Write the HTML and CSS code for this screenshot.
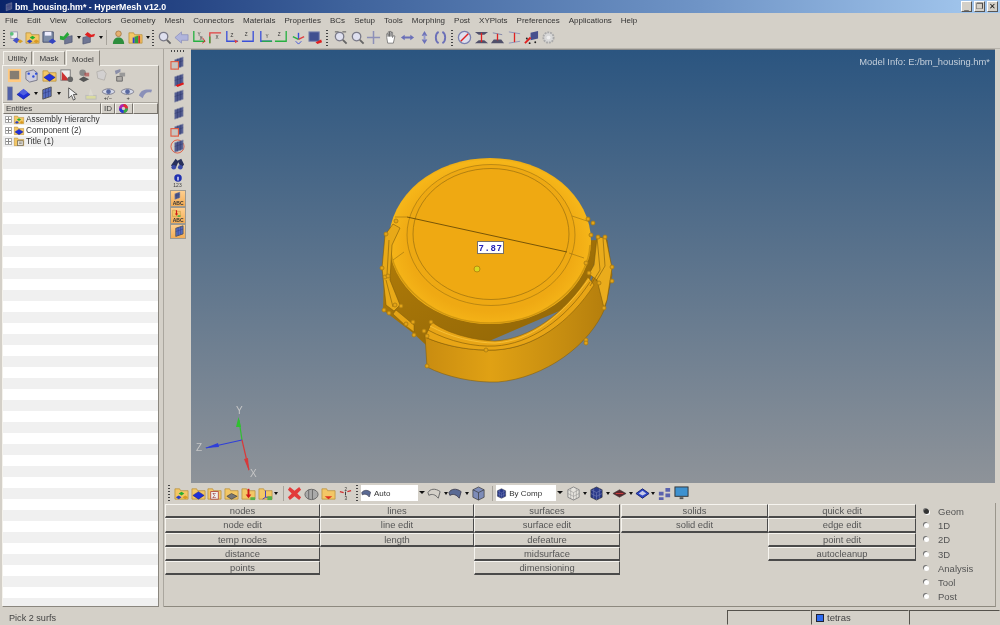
FILE: index.html
```html
<!DOCTYPE html>
<html lang="en">
<head>
<meta charset="utf-8">
<title>bm_housing.hm* - HyperMesh v12.0</title>
<link rel="stylesheet" href="styles.css">
</head>
<body>
<svg class="defs" width="0" height="0" aria-hidden="true">
  <defs>
    <symbol id="folder" viewBox="0 0 16 16"><path d="M1 3h5l1 2h8v9H1z" fill="#f3c766" stroke="#b88f3c" stroke-width=".8"/></symbol>
    <symbol id="folder-assy" viewBox="0 0 16 16"><use href="#folder"/><path d="M2 12l3-2 3 2-3 2z" fill="#2b3fc4"/><path d="M5 8l3-2 3 2-3 2z" fill="#22b030"/><path d="M9 12l3-2 3 2-3 2z" fill="#d99a22"/></symbol>
    <symbol id="folder-comp" viewBox="0 0 16 16"><use href="#folder"/><path d="M2 10l6-4 6 4-6 4z" fill="#2030d8" stroke="#101a80" stroke-width=".5"/></symbol>
    <symbol id="folder-title" viewBox="0 0 16 16"><use href="#folder"/><rect x="6" y="7" width="8" height="7" fill="#e8e4da" stroke="#444" stroke-width=".8"/><path d="M8 9h4M8 11h4" stroke="#444" stroke-width=".7"/></symbol>
    <symbol id="folder-load" viewBox="0 0 16 16"><use href="#folder"/><path d="M8 3v8" stroke="#d01818" stroke-width="2"/><path d="M5 9h6l-3 4z" fill="#d01818"/><rect x="10" y="12" width="5" height="3" fill="#58b048"/></symbol>
    <symbol id="folder-sys" viewBox="0 0 16 16"><use href="#folder"/><path d="M8 5v7h6" stroke="#3a3ac0" fill="none" stroke-width="1"/><path d="M8 12l-3 2" stroke="#3a3ac0"/><rect x="10" y="11" width="5" height="4" fill="#58b048"/></symbol>
    <symbol id="folder-x" viewBox="0 0 16 16"><use href="#folder"/><rect x="4" y="6" width="8" height="8" fill="#eee" stroke="#a33" stroke-width=".8"/><text x="5.500" y="13" font-size="7" font-family="Liberation Sans" fill="#933">Σ</text></symbol>
    <symbol id="folder-solid" viewBox="0 0 16 16"><use href="#folder"/><path d="M3 11l5-3 6 3-6 3z" fill="#777" stroke="#333" stroke-width=".6"/></symbol>
    <symbol id="folder-rb" viewBox="0 0 16 16"><use href="#folder"/><path d="M4 11h8l-4 3z" fill="#e03020"/></symbol>
    <symbol id="node" viewBox="0 0 16 16"><rect x="2" y="2" width="7" height="7" fill="#f0f0f0" stroke="#9a9ab0"/><circle cx="3" cy="4" r="2" fill="#5cc27a"/><path d="M4 11l4-3 4 3-4 3z" fill="#4452c8"/><path d="M9 12l3-2 3 2-3 2z" fill="#d7a02a"/></symbol>
    <symbol id="disk" viewBox="0 0 16 16"><path d="M1 2h11v11H1z" fill="#7f8ea8" stroke="#46506e"/><rect x="3" y="2" width="7" height="4" fill="#eef"/><path d="M7 12l4-3 4 3-4 3z" fill="#3545c0"/></symbol>
    <symbol id="imp" viewBox="0 0 16 16"><path d="M6 8l8-2v7l-8 2z" fill="#6f7693" stroke="#414868" stroke-width=".6"/><path d="M1 6l4 1 4-5 2 3-6 6-4-1z" fill="#28a838"/></symbol>
    <symbol id="exp" viewBox="0 0 16 16"><path d="M2 8l8-2v7l-8 2z" fill="#6f7693" stroke="#414868" stroke-width=".6"/><path d="M15 4l-4 1-4-3-3 3 5 3 5-1z" fill="#e02020"/></symbol>
    <symbol id="user" viewBox="0 0 16 16"><circle cx="8" cy="4" r="3" fill="#e6b070" stroke="#8a5a20" stroke-width=".6"/><path d="M2 15c0-5 3-7 6-7s6 2 6 7z" fill="#2e8e3e"/></symbol>
    <symbol id="rainbow" viewBox="0 0 16 16"><use href="#folder"/><path d="M7 14V7h2v7zM9 14V6h2v8z" fill="#30a040"/><path d="M11 14V6h2v8z" fill="#d03030"/><path d="M5 14V8h2v6z" fill="#3040d0"/></symbol>
    <symbol id="zoom" viewBox="0 0 16 16"><circle cx="7" cy="7" r="4.500" fill="#dfe0ef" stroke="#7a7a88" stroke-width="1.400"/><path d="M10.500 10.500l4 4" stroke="#666" stroke-width="2"/></symbol>
    <symbol id="left" viewBox="0 0 16 16"><path d="M1 8l7-6v3h7v6H8v3z" fill="#b0b4dc" stroke="#8488b8" stroke-width=".7"/></symbol>
    <symbol id="ax-a" viewBox="0 0 16 16"><path d="M3 1v11h12" fill="none" stroke="#26b040" stroke-width="1.400"/><path d="M12 8l3 4-3 2" fill="none" stroke="#d03030" stroke-width="1"/><text x="7" y="6" font-size="5" font-family="Liberation Sans" fill="#333">Y</text><text x="9" y="11" font-size="5" font-family="Liberation Sans" fill="#333">X</text></symbol>
    <symbol id="ax-b" viewBox="0 0 16 16"><path d="M3 14V3h12" fill="none" stroke="#e04040" stroke-width="1.400"/><path d="M3 14V7" stroke="#26b040" stroke-width="1.400"/><text x="9" y="10" font-size="5" font-family="Liberation Sans" fill="#333">X</text></symbol>
    <symbol id="ax-c" viewBox="0 0 16 16"><path d="M3 1v11h12" fill="none" stroke="#3a50d8" stroke-width="1.400"/><path d="M11 10l4 2-3 2" fill="#e04040"/><text x="7" y="7" font-size="5" font-family="Liberation Sans" fill="#333">Z</text></symbol>
    <symbol id="ax-d" viewBox="0 0 16 16"><path d="M13 1v11H1" fill="none" stroke="#3a50d8" stroke-width="1.400"/><text x="4" y="6" font-size="5" font-family="Liberation Sans" fill="#333">Z</text></symbol>
    <symbol id="ax-e" viewBox="0 0 16 16"><path d="M3 1v11h12" fill="none" stroke="#3a50d8" stroke-width="1.400"/><path d="M4 12h11" stroke="#26b040" stroke-width="1.400"/><text x="8" y="8" font-size="5" font-family="Liberation Sans" fill="#333">Y</text></symbol>
    <symbol id="ax-f" viewBox="0 0 16 16"><path d="M13 1v11H1" fill="none" stroke="#26b040" stroke-width="1.400"/><text x="4" y="6" font-size="5" font-family="Liberation Sans" fill="#333">Z</text></symbol>
    <symbol id="ax-g" viewBox="0 0 16 16"><path d="M8 3v7" stroke="#3a50d8" stroke-width="1.500"/><path d="M8 10l-6-3" stroke="#26b040" stroke-width="1.500"/><path d="M8 10l6-3" stroke="#e04040" stroke-width="1.500"/><path d="M5 12l3 3 3-3" stroke="#3a50d8" fill="none"/></symbol>
    <symbol id="screen" viewBox="0 0 16 16"><rect x="1" y="2" width="11" height="10" fill="#405090" stroke="#7d86b0"/><path d="M8 13l6-3 1 3-5 2z" fill="#e02020"/></symbol>
    <symbol id="zoom-m" viewBox="0 0 16 16"><path d="M2 2h4M10 2h4" stroke="#555"/><use href="#zoom"/></symbol>
    <symbol id="cross" viewBox="0 0 16 16"><path d="M8 1v14M1 8h14" stroke="#8d90b8" stroke-width="1.600"/></symbol>
    <symbol id="hand" viewBox="0 0 16 16"><path d="M4 8V4h1.500v3V2H7v5V1.500h1.600V7V2.500h1.600V8l1-2 1.500.5L11 14H5z" fill="#fff" stroke="#555" stroke-width=".7"/></symbol>
    <symbol id="arr-h" viewBox="0 0 16 16"><path d="M1 8l4-3v2h6V5l4 3-4 3V9H5v2z" fill="#6b70b8"/></symbol>
    <symbol id="arr-v" viewBox="0 0 16 16"><path d="M8 1l3 5H5zM8 15l3-5H5z" fill="#6b70b8"/><rect x="7" y="5" width="2" height="6" fill="#9498cc"/></symbol>
    <symbol id="rot" viewBox="0 0 16 16"><path d="M6 2C2 4 2 12 6 14M10 2c4 2 4 10 0 12" fill="none" stroke="#6b70b8" stroke-width="2"/></symbol>
    <symbol id="nomeas" viewBox="0 0 16 16"><circle cx="8" cy="8" r="6.500" fill="#dfe0ee" stroke="#7a80b0" stroke-width="1.400"/><path d="M4 12l8-8" stroke="#e02020" stroke-width="1.600"/></symbol>
    <symbol id="gap-a" viewBox="0 0 16 16"><path d="M1 2h14l-4 3H5zM1 14h14l-4-3H5z" fill="#50506a"/><path d="M8 3v10" stroke="#e02020" stroke-width="1.400"/></symbol>
    <symbol id="gap-b" viewBox="0 0 16 16"><path d="M1 14h14l-3-4H4z" fill="#50506a"/><path d="M3 3l10 2" stroke="#7f84a8"/><path d="M8 4v7" stroke="#e02020" stroke-width="1.400"/></symbol>
    <symbol id="gap-c" viewBox="0 0 16 16"><path d="M2 2l12 2M2 14l12-2" stroke="#8d90b8"/><path d="M8 3v10" stroke="#e02020" stroke-width="1.400"/></symbol>
    <symbol id="meas" viewBox="0 0 16 16"><path d="M7 3l8-2v8l-8 2z" fill="#46508e"/><path d="M1 14l6-6" stroke="#e02020" stroke-width="2"/><circle cx="3" cy="9" r="1" fill="#222"/><circle cx="6" cy="14" r="1" fill="#222"/><circle cx="12" cy="13" r="1" fill="#222"/></symbol>
    <symbol id="gear" viewBox="0 0 16 16"><circle cx="8" cy="8" r="5.500" fill="#d8d8d8" stroke="#aaa" stroke-width="2" stroke-dasharray="2 1"/><circle cx="8" cy="8" r="2" fill="#eee"/></symbol>
    <symbol id="plate" viewBox="0 0 16 16"><path d="M5 4l9-3v10l-9 3z" fill="#4e588e" stroke="#8b90a8" stroke-width=".7"/><path d="M8 3v10M11 2v10M5 8l9-3" stroke="#30386e" stroke-width=".5"/></symbol>
    <symbol id="plate-box" viewBox="0 0 16 16"><use href="#plate"/><rect x="1" y="6" width="8" height="8" fill="#c9c5c0" stroke="#e25a40" stroke-width="1.200"/></symbol>
    <symbol id="plate-red" viewBox="0 0 16 16"><use href="#plate"/><path d="M6 13l8-3 1 2-7 3z" fill="#e01818"/></symbol>
    <symbol id="plate-c" viewBox="0 0 16 16"><circle cx="8" cy="8" r="7" fill="none" stroke="#e25a40" stroke-width="1"/><use href="#plate"/></symbol>
    <symbol id="bino" viewBox="0 0 16 16"><path d="M1 10L6 3l3 3-3 7zM8 5l4-2 3 6-3 4z" fill="#28305c"/><circle cx="4" cy="12" r="2.500" fill="#3a4aa8"/><circle cx="11" cy="12" r="2.500" fill="#3a4aa8"/></symbol>
    <symbol id="info" viewBox="0 0 16 16"><circle cx="8" cy="8" r="6" fill="#2030b0"/><rect x="7" y="6" width="2" height="6" fill="#fff"/></symbol>
    <symbol id="sq-shade" viewBox="0 0 16 16"><rect x="1" y="1" width="14" height="14" fill="#ffc980"/><rect x="3" y="3" width="10" height="9" fill="#857d72"/></symbol>
    <symbol id="dots" viewBox="0 0 16 16"><path d="M2 4l8-2 4 3v8l-8 2-4-3z" fill="#ccd" stroke="#778"/><circle cx="5" cy="6" r="1.300" fill="#3050d8"/><circle cx="10" cy="9" r="1.300" fill="#3050d8"/><circle cx="13" cy="6" r="1.300" fill="#3050d8"/></symbol>
    <symbol id="comp" viewBox="0 0 16 16"><path d="M1 9l7-5 7 5-7 5z" fill="#2030d8" stroke="#101a80" stroke-width=".6"/><path d="M3 7l5-4 5 4-5 3z" fill="#5060e0"/></symbol>
    <symbol id="x-sheet" viewBox="0 0 16 16"><rect x="2" y="2" width="10" height="11" fill="#eee" stroke="#777"/><path d="M3 13V4l8 9z" fill="#c33"/><circle cx="12" cy="12" r="3" fill="#666"/></symbol>
    <symbol id="tool" viewBox="0 0 16 16"><path d="M2 12l5-3 6 3-6 3z" fill="#555"/><circle cx="6" cy="5" r="3.500" fill="#888"/><path d="M8 5h5v4H8z" fill="#a33" opacity=".6"/></symbol>
    <symbol id="pale" viewBox="0 0 16 16"><path d="M3 4l7-2 3 4-2 7-7-2z" fill="#d2d0d0" stroke="#b5b2ae"/></symbol>
    <symbol id="tie" viewBox="0 0 16 16"><path d="M3 3l6-2v3l-5 3z" fill="#8a8ea8"/><path d="M5 9h6v5H5z" fill="#b0aca8" stroke="#666"/><path d="M8 5h6v4H8z" fill="#999"/></symbol>
    <symbol id="strip" viewBox="0 0 16 16"><rect x="6" y="1" width="5" height="14" fill="#5060a8" stroke="#7a7e9a" stroke-width=".6"/></symbol>
    <symbol id="sheet" viewBox="0 0 16 16"><path d="M4 4l9-3v10l-9 3z" fill="#556cc0" stroke="#555"/><path d="M7 3v10M10 2v10M4 8l9-3" stroke="#303a80" stroke-width=".6"/></symbol>
    <symbol id="cursor" viewBox="0 0 16 16"><path d="M5 2v11l3-3 2 5 2-1-2-5h4z" fill="#f4f4f4" stroke="#333" stroke-width=".8"/></symbol>
    <symbol id="bulb" viewBox="0 0 16 16"><rect x="3" y="10" width="11" height="4" fill="#dadba0" stroke="#bbb"/><path d="M8 3l3 7H6z" fill="#dcd9d0"/></symbol>
    <symbol id="eye" viewBox="0 0 16 16"><path d="M1 6c3-4 11-4 14 0-3 4-11 4-14 0z" fill="#d4d8e8" stroke="#7a7a8a"/><circle cx="8" cy="6" r="2.500" fill="#5868a0"/></symbol>
    <symbol id="eye-pm" viewBox="0 0 16 16"><use href="#eye"/><text x="3" y="15" font-size="6" font-family="Liberation Sans" fill="#333">+/−</text></symbol>
    <symbol id="eye-dot" viewBox="0 0 16 16"><use href="#eye"/><text x="7" y="15" font-size="6" font-family="Liberation Sans" fill="#333">+</text></symbol>
    <symbol id="swoop" viewBox="0 0 16 16"><path d="M1 10c2-6 7-7 14-6l-1 3c-5-1-7 1-9 6z" fill="#8a90b8"/></symbol>
    <symbol id="del" viewBox="0 0 16 16"><path d="M3 1l5 4 5-4 2 3-4 4 4 4-2 3-5-4-5 4-2-3 4-4-4-4z" fill="#e23a3a"/></symbol>
    <symbol id="rolls" viewBox="0 0 16 16"><ellipse cx="8" cy="9" rx="7" ry="5.500" fill="#aaa" stroke="#666"/><path d="M5 4v10M9 4v10" stroke="#666"/></symbol>
    <symbol id="num" viewBox="0 0 16 16"><text x="7" y="5" font-size="5" font-family="Liberation Sans" fill="#333">2</text><text x="7" y="15" font-size="5" font-family="Liberation Sans" fill="#333">3</text><path d="M2 6l4 1M10 6l4-1" stroke="#d03030" stroke-width="1.500"/><path d="M8 6v4" stroke="#333"/></symbol>
    <symbol id="curve" viewBox="0 0 16 16"><path d="M1 7c2-4 8-5 13-1l-2 7C9 9 5 8 2 10z" fill="none" stroke="#666"/></symbol>
    <symbol id="patch" viewBox="0 0 16 16"><path d="M1 7c2-4 8-5 13-1l-2 7C9 9 5 8 2 10z" fill="#5a6a94" stroke="#445"/></symbol>
    <symbol id="cube" viewBox="0 0 16 16"><path d="M8 1l6 3v8l-6 3-6-3V4z" fill="#7e8cb8" stroke="#333" stroke-width=".7"/><path d="M2 4l6 3 6-3M8 7v8" stroke="#333" stroke-width=".7" fill="none"/></symbol>
    <symbol id="cube-wire" viewBox="0 0 16 16"><path d="M8 1l6 3v8l-6 3-6-3V4z" fill="#e4e2dc" stroke="#888"/><path d="M2 4l6 3 6-3M8 7v8M5 2.500v11M11 2.500v11M2 8l6 3 6-3" stroke="#888" stroke-width=".5" fill="none"/></symbol>
    <symbol id="cube-dark" viewBox="0 0 16 16"><path d="M8 1l6 3v8l-6 3-6-3V4z" fill="#2a3a8a" stroke="#222" stroke-width=".6"/><path d="M2 4l6 3 6-3M8 7v8M5 2.500v11M11 2.500v11M2 8l6 3 6-3" stroke="#8890c0" stroke-width=".5" fill="none"/></symbol>
    <symbol id="flat" viewBox="0 0 16 16"><path d="M1 8l7-4 7 4-7 4z" fill="#5a2a30" stroke="#333" stroke-width=".6"/><path d="M4 8h8" stroke="#d04040"/></symbol>
    <symbol id="flat-blue" viewBox="0 0 16 16"><path d="M1 8l7-5 7 5-7 5z" fill="#3048c8" stroke="#1a2470"/><path d="M4 8l4-3 4 3-4 2z" fill="#c8cce8"/></symbol>
    <symbol id="pieces" viewBox="0 0 16 16"><path d="M9 2h5v4H9zM2 6h5v4H2zM9 8h5v4H9zM2 12h5v3H2z" fill="#5a62ae"/></symbol>
    <symbol id="monitor" viewBox="0 0 16 16"><rect x="1" y="1" width="14" height="10" fill="#3e92d0" stroke="#333"/><path d="M6 12h4v2H6z" fill="#555"/></symbol>
    <symbol id="pt" viewBox="0 0 6 6"><circle cx="3" cy="3" r="2" fill="#e2a318" stroke="#a87a10" stroke-width=".8"/></symbol>

    <linearGradient id="vp" x1="0" y1="0" x2="0" y2="1"><stop offset="0" stop-color="#2b5580"/><stop offset="1" stop-color="#8e9399"/></linearGradient>
    <linearGradient id="wall" x1="0" y1="0" x2="1" y2="0"><stop offset="0" stop-color="#c98c10"/><stop offset=".35" stop-color="#e0a114"/><stop offset=".75" stop-color="#c58c10"/><stop offset="1" stop-color="#b27c0c"/></linearGradient>
    <linearGradient id="under" x1="0" y1="0" x2="1" y2="1"><stop offset="0" stop-color="#b17c09"/><stop offset="1" stop-color="#8e6406"/></linearGradient>
    <radialGradient id="dome" cx=".5" cy=".52" r=".56"><stop offset=".72" stop-color="#efa913"/><stop offset=".9" stop-color="#f6b619"/><stop offset="1" stop-color="#cf920f"/></radialGradient>
  </defs>
</svg>

<div class="app">
  <header class="titlebar">
    <svg class="title-ic"><use href="#plate"/></svg>
    <span class="title-text">bm_housing.hm* - HyperMesh v12.0</span>
    <div class="winbtns">
      <span class="winbtn">_</span><span class="winbtn">❐</span><span class="winbtn">✕</span>
    </div>
  </header>

  <nav class="menubar">
    <span>File</span><span>Edit</span><span>View</span><span>Collectors</span><span>Geometry</span><span>Mesh</span><span>Connectors</span><span>Materials</span><span>Properties</span><span>BCs</span><span>Setup</span><span>Tools</span><span>Morphing</span><span>Post</span><span>XYPlots</span><span>Preferences</span><span>Applications</span><span>Help</span>
  </nav>

  <div class="toolbar top">
    <i class="grip"></i>
    <svg class="ic"><use href="#node"/></svg>
    <svg class="ic"><use href="#folder-assy"/></svg>
    <svg class="ic"><use href="#disk"/></svg>
    <svg class="ic"><use href="#imp"/></svg><i class="dd"></i>
    <svg class="ic"><use href="#exp"/></svg><i class="dd"></i>
    <i class="sep"></i>
    <svg class="ic"><use href="#user"/></svg>
    <svg class="ic"><use href="#rainbow"/></svg><i class="dd"></i>
    <i class="grip"></i>
    <svg class="ic"><use href="#zoom"/></svg>
    <svg class="ic"><use href="#left"/></svg>
    <svg class="ic"><use href="#ax-a"/></svg>
    <svg class="ic"><use href="#ax-b"/></svg>
    <svg class="ic"><use href="#ax-c"/></svg>
    <svg class="ic"><use href="#ax-d"/></svg>
    <svg class="ic"><use href="#ax-e"/></svg>
    <svg class="ic"><use href="#ax-f"/></svg>
    <svg class="ic"><use href="#ax-g"/></svg>
    <svg class="ic"><use href="#screen"/></svg>
    <i class="grip long"></i>
    <svg class="ic"><use href="#zoom-m"/></svg>
    <svg class="ic"><use href="#zoom"/></svg>
    <svg class="ic"><use href="#cross"/></svg>
    <svg class="ic"><use href="#hand"/></svg>
    <svg class="ic"><use href="#arr-h"/></svg>
    <svg class="ic"><use href="#arr-v"/></svg>
    <svg class="ic"><use href="#rot"/></svg>
    <i class="grip"></i>
    <svg class="ic"><use href="#nomeas"/></svg>
    <svg class="ic"><use href="#gap-a"/></svg>
    <svg class="ic"><use href="#gap-b"/></svg>
    <svg class="ic"><use href="#gap-c"/></svg>
    <svg class="ic"><use href="#meas"/></svg>
    <svg class="ic"><use href="#gear"/></svg>
  </div>

  <div class="workspace">
    <aside class="browser">
      <div class="tabs">
        <span class="tab t-utility">Utility</span><span class="tab t-mask">Mask</span><span class="tab t-model active">Model</span>
      </div>
      <div class="browser-frame">
        <div class="icon-row first">
          <svg class="ic"><use href="#sq-shade"/></svg>
          <svg class="ic"><use href="#dots"/></svg>
          <svg class="ic"><use href="#folder-comp"/></svg>
          <svg class="ic"><use href="#x-sheet"/></svg>
          <svg class="ic"><use href="#tool"/></svg>
          <svg class="ic"><use href="#pale"/></svg>
          <svg class="ic"><use href="#tie"/></svg>
        </div>
        <div class="icon-row second">
          <svg class="ic narrow"><use href="#strip"/></svg>
          <svg class="ic"><use href="#comp"/></svg><i class="dd"></i>
          <svg class="ic"><use href="#sheet"/></svg><i class="dd"></i>
          <svg class="ic roomy"><use href="#cursor"/></svg>
          <svg class="ic roomy"><use href="#bulb"/></svg>
          <svg class="ic roomy"><use href="#eye-pm"/></svg>
          <svg class="ic roomy"><use href="#eye-dot"/></svg>
          <svg class="ic"><use href="#swoop"/></svg>
        </div>
        <div class="col-head">
          <span class="col-entities">Entities</span><span class="col-id">ID</span><span class="col-color"><svg class="swatch" viewBox="0 0 10 10"><circle cx="5" cy="5" r="3.500" fill="none" stroke="#b020b0" stroke-width="3"/><path d="M5 1.500a3.500 3.500 0 0 1 3.500 3.500" fill="none" stroke="#e03030" stroke-width="3"/><path d="M8.500 5A3.500 3.500 0 0 1 5 8.500" fill="none" stroke="#30b040" stroke-width="3"/><path d="M5 8.500A3.500 3.500 0 0 1 1.500 5" fill="none" stroke="#2040d0" stroke-width="3"/></svg></span><span class="col-rest"></span>
        </div>
        <ul class="tree">
          <li><i class="plus"></i><svg class="tree-ic"><use href="#folder-assy"/></svg>Assembly Hierarchy</li>
          <li><i class="plus"></i><svg class="tree-ic"><use href="#folder-comp"/></svg>Component (2)</li>
          <li><i class="plus"></i><svg class="tree-ic"><use href="#folder-title"/></svg>Title (1)</li>
        </ul>
      </div>
    </aside>

    <main class="main">
      <div class="view-row">
        <div class="strip">
          <i class="strip-grip"></i>
          <svg class="ic"><use href="#plate-box"/></svg>
          <svg class="ic"><use href="#plate-red"/></svg>
          <svg class="ic"><use href="#plate"/></svg>
          <svg class="ic"><use href="#plate"/></svg>
          <svg class="ic"><use href="#plate-box"/></svg>
          <svg class="ic"><use href="#plate-c"/></svg>
          <svg class="ic"><use href="#bino"/></svg>
          <div class="info-ic"><svg class="ic small"><use href="#info"/></svg><span>123</span></div>
          <span class="abc"><svg class="abc-ic"><use href="#plate"/></svg><b>ABC</b></span>
          <span class="abc"><svg class="abc-ic"><use href="#folder-load"/></svg><b>ABC</b></span>
          <span class="abc plain"><svg class="abc-ic wide"><use href="#sheet"/></svg></span>
        </div>
        <div class="viewport">
          <svg class="scene" viewBox="191 50 804 433" preserveAspectRatio="none">
            <rect x="191" y="50" width="804" height="433" fill="url(#vp)"/>
            <text class="model-info" x="990" y="65" text-anchor="end">Model Info: E:/bm_housing.hm*</text>

            <path d="M385 245L383 310L413 333L426 345L480 345L585 300L600 240Z" fill="url(#under)"/>
            <path d="M425 335L427 367C446 377 475 383 498 382C545 378 590 345 605 308L612 275L607 240L590 285C570 322 535 348 495 350C465 351 440 344 425 337Z" fill="url(#wall)" stroke="#8a6208" stroke-width=".6"/>
            <path d="M432 322C445 332 470 340 495 341C530 339 565 313 588 277L594 285C570 322 535 348 495 350C465 351 440 344 425 337Z" fill="#e8a516" stroke="#8a6208" stroke-width=".6"/>
            <path d="M428 330C450 342 475 347 495 346C530 344 565 320 590 282" fill="none" stroke="#8a6208" stroke-width=".7"/>
            <path d="M430 326C450 337 475 343 495 343C530 341 560 318 589 279" fill="none" stroke="#f7c23a" stroke-width=".9"/>
            <ellipse cx="490" cy="241" rx="101" ry="83" fill="url(#dome)"/>
            <path d="M390 245C392 285 435 323 490 323C545 323 588 285 590 245" fill="none" stroke="#b8830c" stroke-width="1.500" opacity=".6"/>
            <ellipse cx="491" cy="235" rx="84" ry="70.500" fill="#eea913" stroke="#9a7010" stroke-width=".6"/>
            <ellipse cx="491" cy="234" rx="78" ry="65.500" fill="#efa912" stroke="#8a6410" stroke-width=".6"/>
            <path d="M407 217L567 252" stroke="#6a4c06" stroke-width=".9"/>
            <path d="M395 217H407M569 253L584 258M404 252L393 260M572 216L590 222" stroke="#9a7010" stroke-width=".6"/>

            <path d="M393 224L385 235L382 268L386 305L394 311L400 305L390 280L392 245L400 228Z" fill="#e8a918" stroke="#7d5a0a" stroke-width=".6"/>
            <path d="M386 280L393 307M389 240L387 275" stroke="#7d5a0a" stroke-width=".6"/>
            <path d="M396 310L414 325L414 332L406 326L393 314Z" fill="#e6a516" stroke="#7d5a0a" stroke-width=".5"/>
            <path d="M597 237L606 238L612 268L607 300L604 308L597 280L589 274L594 265Z" fill="#eaac1c" stroke="#7d5a0a" stroke-width=".6"/>
            <path d="M597 237L600 270L590 286M603 238L605 266L596 281" fill="none" stroke="#7d5a0a" stroke-width=".6"/>

            <g class="pts">
              <use href="#pt" x="393" y="218" width="6" height="6"/><use href="#pt" x="383" y="231" width="6" height="6"/><use href="#pt" x="379" y="265" width="6" height="6"/><use href="#pt" x="382" y="274" width="6" height="6"/><use href="#pt" x="385" y="273" width="6" height="6"/><use href="#pt" x="381" y="307" width="6" height="6"/><use href="#pt" x="386" y="310" width="6" height="6"/><use href="#pt" x="392" y="302" width="6" height="6"/><use href="#pt" x="398" y="303" width="6" height="6"/><use href="#pt" x="403" y="321" width="6" height="6"/><use href="#pt" x="410" y="319" width="6" height="6"/><use href="#pt" x="411" y="332" width="6" height="6"/><use href="#pt" x="421" y="328" width="6" height="6"/><use href="#pt" x="424" y="333" width="6" height="6"/><use href="#pt" x="428" y="319" width="6" height="6"/><use href="#pt" x="424" y="363" width="6" height="6"/><use href="#pt" x="585" y="216" width="6" height="6"/><use href="#pt" x="590" y="220" width="6" height="6"/><use href="#pt" x="588" y="232" width="6" height="6"/><use href="#pt" x="595" y="234" width="6" height="6"/><use href="#pt" x="602" y="234" width="6" height="6"/><use href="#pt" x="609" y="264" width="6" height="6"/><use href="#pt" x="609" y="278" width="6" height="6"/><use href="#pt" x="583" y="260" width="6" height="6"/><use href="#pt" x="586" y="270" width="6" height="6"/><use href="#pt" x="596" y="280" width="6" height="6"/><use href="#pt" x="601" y="305" width="6" height="6"/><use href="#pt" x="583" y="337" width="6" height="6"/><use href="#pt" x="583" y="340" width="6" height="6"/><use href="#pt" x="483" y="347" width="6" height="6"/>
            </g>

            <circle cx="477" cy="269" r="3" fill="#d8d820" stroke="#b88a10" stroke-width="1"/>
            <rect x="477.500" y="241.500" width="26" height="12" fill="#fff" stroke="#77706a"/>
            <text class="measure" x="490.500" y="250.500" text-anchor="middle">7.87</text>

            <g class="axis">
              <path d="M242 440L239 420" stroke="#30c030" stroke-width="1.200"/><path d="M236 427L238.500 417L241 427Z" fill="#30c030"/>
              <path d="M242 440L206 448" stroke="#2f3fd8" stroke-width="1.200"/><path d="M205 448L218 443L219 447Z" fill="#2f3fd8"/>
              <path d="M242 440L249 470" stroke="#d83a3a" stroke-width="1.200"/><path d="M244 459L249 471L248 458Z" fill="#d83a3a"/>
              <text x="236" y="414">Y</text><text x="196" y="451">Z</text><text x="250" y="477">X</text>
            </g>
          </svg>
        </div>
      </div>

      <div class="toolbar bottom">
        <i class="grip"></i>
        <svg class="ic"><use href="#folder-assy"/></svg>
        <svg class="ic"><use href="#folder-comp"/></svg>
        <svg class="ic"><use href="#folder-x"/></svg>
        <svg class="ic"><use href="#folder-solid"/></svg>
        <svg class="ic"><use href="#folder-load"/></svg>
        <svg class="ic"><use href="#folder-sys"/></svg><i class="dd"></i>
        <i class="sep"></i>
        <svg class="ic"><use href="#del"/></svg>
        <svg class="ic"><use href="#rolls"/></svg>
        <svg class="ic"><use href="#folder-rb"/></svg>
        <svg class="ic"><use href="#num"/></svg>
        <i class="grip"></i>
        <div class="combo first-combo"><svg class="combo-ic"><use href="#patch"/></svg><span>Auto</span><i class="combo-btn"></i></div>
        <svg class="ic"><use href="#curve"/></svg><i class="dd"></i>
        <svg class="ic"><use href="#patch"/></svg><i class="dd wide"></i>
        <svg class="ic"><use href="#cube"/></svg>
        <i class="sep"></i>
        <div class="combo second-combo"><svg class="combo-ic"><use href="#cube-dark"/></svg><span>By Comp</span><i class="combo-btn"></i></div>
        <svg class="ic"><use href="#cube-wire"/></svg><i class="dd wide"></i>
        <svg class="ic"><use href="#cube-dark"/></svg><i class="dd wide"></i>
        <svg class="ic"><use href="#flat"/></svg><i class="dd wide"></i>
        <svg class="ic"><use href="#flat-blue"/></svg><i class="dd wide"></i>
        <svg class="ic"><use href="#pieces"/></svg>
        <svg class="ic"><use href="#monitor"/></svg>
      </div>

      <section class="panels">
        <div class="btn-col c1"><button>nodes</button><button>node edit</button><button>temp nodes</button><button>distance</button><button>points</button></div>
        <div class="btn-col c2"><button>lines</button><button>line edit</button><button>length</button></div>
        <div class="btn-col c3"><button>surfaces</button><button>surface edit</button><button>defeature</button><button>midsurface</button><button>dimensioning</button></div>
        <div class="btn-col c4"><button>solids</button><button>solid edit</button></div>
        <div class="btn-col c5"><button>quick edit</button><button>edge edit</button><button>point edit</button><button>autocleanup</button></div>
        <div class="radios">
          <label class="on"><i></i>Geom</label><label><i></i>1D</label><label><i></i>2D</label><label><i></i>3D</label><label><i></i>Analysis</label><label><i></i>Tool</label><label><i></i>Post</label>
        </div>
      </section>
    </main>
  </div>

  <footer class="status">
    <span class="status-msg">Pick 2 surfs</span>
    <span class="cell c-a"></span>
    <span class="cell c-b"><i class="chip"></i>tetras</span>
    <span class="cell c-c"></span>
  </footer>
</div>
</body>
</html>
```

FILE: styles.css
```css
* { box-sizing: border-box; }
html, body { margin: 0; padding: 0; }
body { width: 1000px; height: 625px; overflow: hidden; background: #d4d0c8; font-family: "Liberation Sans", Arial, sans-serif; font-size: 8px; color: #3c3c3c; }
.defs { position: absolute; }
.app { width: 1000px; height: 625px; display: flex; flex-direction: column; background: #d4d0c8; filter: blur(.45px); }

.titlebar { height: 13px; flex: none; display: flex; align-items: center; padding-left: 3px; color: #fff; background: linear-gradient(90deg, #0a246a 0%, #3f639c 35%, #6f94c6 70%, #a6caf0 100%); }
.title-ic { width: 10px; height: 10px; flex: none; margin-right: 2px; }
.title-text { font-size: 8.800px; font-weight: bold; }
.winbtns { margin-left: auto; margin-right: 2px; display: flex; gap: 2px; }
.winbtn { width: 11px; height: 11px; background: #d4d0c8; color: #111; font-size: 8px; line-height: 10px; text-align: center; border: 1px solid; border-color: #fff #555 #555 #fff; }

.menubar { height: 14px; flex: none; display: flex; gap: 9px; align-items: center; padding-left: 5px; color: #333; }

.toolbar { height: 22px; flex: none; display: flex; align-items: center; padding-left: 1.750px; border-bottom: 1px solid #b8b4ac; }
.ic { width: 15px; height: 15px; flex: none; margin-right: 1.750px; }
.grip { width: 2px; height: 16px; flex: none; margin: 0 3.500px 0 1.250px; background: repeating-linear-gradient(180deg, #444 0 1px, transparent 1px 3px); }
.grip.long { margin-right: 5px; }
.dd { width: 0; height: 0; flex: none; margin: 0 .5px 0 1px; border: 2px solid transparent; border-top: 3px solid #111; border-bottom: 0; }
.dd.wide { margin: 0 2px 0 0; }
.sep { width: 1px; height: 15px; flex: none; margin: 0 4px 0 3px; background: #a8a49c; }

.workspace { flex: 1; display: flex; min-height: 0; }
.browser { width: 159px; flex: none; padding: 0 0 0 2px; display: flex; flex-direction: column; }
.tabs { height: 16px; flex: none; display: flex; align-items: flex-end; padding-left: 1px; gap: 1px; }
.tab { height: 14px; padding: 2px 0 0; text-align: center; font-size: 8px; border: 1px solid; border-color: #f4f2ec #8a867e transparent #f4f2ec; white-space: nowrap; }
.t-utility { width: 29px; }
.t-mask { width: 32px; }
.t-model { width: 34px; }
.tab.active { height: 16px; padding-top: 4px; margin-bottom: -1px; position: relative; background: #d4d0c8; }
.browser-frame { flex: 1; display: flex; flex-direction: column; border: 1px solid; border-color: #f4f2ec #8a867e #8a867e #f4f2ec; min-height: 0; }
.icon-row { height: 18px; flex: none; display: flex; align-items: center; }
.icon-row.first { height: 19px; padding-left: 3.500px; gap: .75px; }
.icon-row.second { padding-left: 0; border-bottom: 1px solid #aaa69e; }
.icon-row.second .ic { margin-right: 2px; }
.icon-row.second .ic.narrow { margin-right: -1px; margin-left: -1px; }
.icon-row.second .ic.roomy { margin-right: 3.500px; }
.icon-row.second .dd + .ic.roomy { margin-left: 3px; }
.col-head { height: 11px; flex: none; display: flex; font-size: 8px; line-height: 10px; }
.col-head span { border: 1px solid; border-color: #f4f2ec #77736c #77736c #f4f2ec; padding-left: 2px; }
.col-entities { width: 98px; }
.col-id { width: 14px; }
.col-color { width: 18px; padding-left: 3px !important; }
.col-rest { flex: 1; }
.swatch { width: 9px; height: 9px; display: block; }
.tree { flex: 1; list-style: none; margin: 0; padding: 0; background: repeating-linear-gradient(180deg, #f0f0f0 0 11px, #ffffff 11px 22px); }
.tree li { height: 11px; line-height: 11px; display: flex; align-items: center; padding-left: 2px; font-size: 8.300px; color: #333; white-space: nowrap; }
.plus { width: 7px; height: 7px; flex: none; border: 1px solid #aaa; margin-right: 1px; background: linear-gradient(#888,#888) center/5px 1px no-repeat, linear-gradient(#888,#888) center/1px 5px no-repeat, #fff; }
.tree-ic { width: 12px; height: 11px; flex: none; margin-right: 1px; }

.main { flex: 1; display: flex; flex-direction: column; min-width: 0; border-left: 1px solid #aaa69e; margin-left: 4px; }
.view-row { height: 434px; flex: none; display: flex; }
.strip { width: 27px; flex: none; display: flex; flex-direction: column; align-items: center; padding-top: 1px; }
.strip-grip { width: 14px; height: 2px; margin-bottom: 4px; background: repeating-linear-gradient(90deg, #444 0 1px, transparent 1px 3px); }
.strip .ic { margin: 0 0 1.700px; }
.info-ic { display: flex; flex-direction: column; align-items: center; height: 17px; font-size: 5px; line-height: 5px; }
.small { width: 10px; height: 10px; margin: 0 !important; }
.abc { width: 16px; height: 17px; flex: none; background: linear-gradient(#ffcf8e, #f3ac55); border: 1px solid #9f9a90; position: relative; display: block; }
.abc.plain { height: 15px; }
.abc b { position: absolute; right: 1px; bottom: 0; font-size: 5px; line-height: 6px; color: #333; }
.abc-ic { position: absolute; left: 1px; top: 0; width: 9px; height: 10px; }
.abc-ic.wide { width: 14px; height: 13px; }
.viewport { width: 804px; flex: none; position: relative; border-top: 1px solid #8a8a8a; }
.scene { display: block; width: 804px; height: 433px; }
.model-info { font: 9.400px "Liberation Sans", sans-serif; fill: #c4cfdb; }
.measure { font: bold 9px "Liberation Mono", monospace; fill: #2323b8; letter-spacing: .6px; }
.axis text { font: 10px "Liberation Sans", sans-serif; fill: #c6c6c6; }

.bottom { height: 20px; border-bottom: 0; padding-left: 3px; }
.bottom .dd { margin-left: 0; }
.bottom .sep { margin-left: 4px; margin-right: 3.500px; }
.combo { height: 16px; flex: none; display: flex; align-items: center; background: #fff; position: relative; font-size: 8px; color: #333; }
.first-combo { width: 66px; }
.second-combo { width: 69px; margin-right: 1px; }
.combo-ic { width: 11px; height: 13px; flex: none; margin-right: 2px; }
.combo-btn { position: absolute; right: 0; top: 0; width: 9px; height: 16px; background: #d4d0c8; }
.combo-btn::after { content: ""; position: absolute; left: 1px; top: 6px; border: 3px solid transparent; border-top: 3px solid #111; border-bottom: 0; }

.panels { flex: 1; display: flex; padding-left: 1px; padding-top: 1px; margin-right: 4px; border-bottom: 1px solid #8d897f; border-right: 1px solid #9a968c; }
.btn-col { display: grid; grid-auto-rows: 14.300px; align-content: start; flex: none; }
.c1 { width: 155px; }
.c2 { width: 154px; }
.c3 { width: 146px; margin-right: 1px; }
.c4 { width: 147px; }
.c5 { width: 148px; }
button { margin: 0; padding: 0; font: 9.400px "Liberation Sans", sans-serif; color: #555; background: #d4d0c8; border: 1px solid; border-color: #f6f4ef #4a4a4a #4a4a4a #f6f4ef; border-bottom-width: 2px; }
.radios { flex: none; margin-left: 8px; display: grid; grid-auto-rows: 14.300px; font-size: 9.500px; color: #555; }
.radios label { display: flex; align-items: center; gap: 9px; }
.radios i { width: 5px; height: 5px; flex: none; border-radius: 50%; background: #fff; box-shadow: -1px -1px 0 #777; }
.radios .on i { background: #333; box-shadow: -1px -1px 0 #777, 1px 1px 0 #fff; }

.status { height: 18px; flex: none; display: flex; align-items: flex-end; font-size: 9.100px; color: #444; }
.status-msg { width: 727px; padding: 0 0 2px 9px; }
.cell { height: 15px; font-size: 9.500px; border: 1px solid; border-color: #55524c transparent transparent #55524c; display: flex; align-items: center; }
.c-a { width: 84px; }
.c-b { width: 98px; padding-left: 4px; }
.c-c { flex: 1; }
.chip { width: 8px; height: 8px; flex: none; margin-right: 3px; background: #2e6bf0; border: 1px solid #223; }
```
